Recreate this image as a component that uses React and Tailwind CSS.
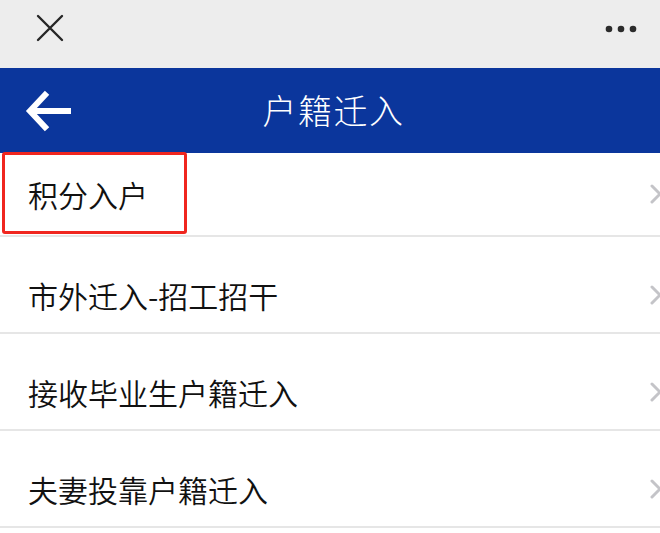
import React from "react";

const items = ["积分入户", "市外迁入-招工招干", "接收毕业生户籍迁入", "夫妻投靠户籍迁入"];

function Chevron() {
  return (
    <svg width="14" height="22" viewBox="0 0 14 22" className="absolute left-[649px]">
      <path d="M3 3 L11 11 L3 19" fill="none" stroke="#c4c4c8" strokeWidth="3" strokeLinecap="round" strokeLinejoin="round" />
    </svg>
  );
}

export default function App() {
  return (
    <div
      className="w-[660px] h-[533px] bg-white overflow-hidden relative"
      style={{ fontFamily: '"Noto Sans CJK SC", "Noto Sans", sans-serif' }}
    >
      <header className="h-[68px] bg-[#ededed] flex items-center justify-between pl-[36px] pr-[23px]">
        <svg width="28" height="28" viewBox="0 0 28 28" className="-mt-[12px]">
          <path d="M2 2 L26 26 M26 2 L2 26" stroke="#262626" strokeWidth="2.4" strokeLinecap="round" />
        </svg>
        <svg width="32" height="8" viewBox="0 0 32 8" className="-mt-[11px]">
          <circle cx="4" cy="4" r="3.3" fill="#2b2b2b" />
          <circle cx="16" cy="4" r="3.3" fill="#2b2b2b" />
          <circle cx="28" cy="4" r="3.3" fill="#2b2b2b" />
        </svg>
      </header>
      <nav className="h-[85px] bg-[#0b369c] relative flex items-center justify-center">
        <svg width="48" height="42" viewBox="0 0 48 42" className="absolute left-[25px] top-[22px]">
          <path d="M7 21 L43 21" stroke="white" strokeWidth="6" strokeLinecap="square" />
          <path d="M20 5 L5 21 L20 37" fill="none" stroke="white" strokeWidth="6" strokeLinecap="square" strokeLinejoin="miter" />
        </svg>
        <h1 className="text-white text-[34px] font-light leading-none tracking-[1.5px] pl-[7px] -mt-[2px]">户籍迁入</h1>
      </nav>
      <ul>
        {items.map((t, i) => (
          <li
            key={t}
            className={
              "relative flex items-center border-b-2 border-[#e6e6e6] pl-[28px] " +
              (i === 0 ? "h-[84px]" : "h-[97px] pt-[20px]")
            }
          >
            <span className="text-[30px] font-[350] leading-none text-[#111111]">{t}</span>
            <Chevron />
          </li>
        ))}
      </ul>
      <div className="absolute left-[2px] top-[152px] w-[185px] h-[82px] border-[3px] border-[#f0261f] rounded-[3px]" />
    </div>
  );
}
